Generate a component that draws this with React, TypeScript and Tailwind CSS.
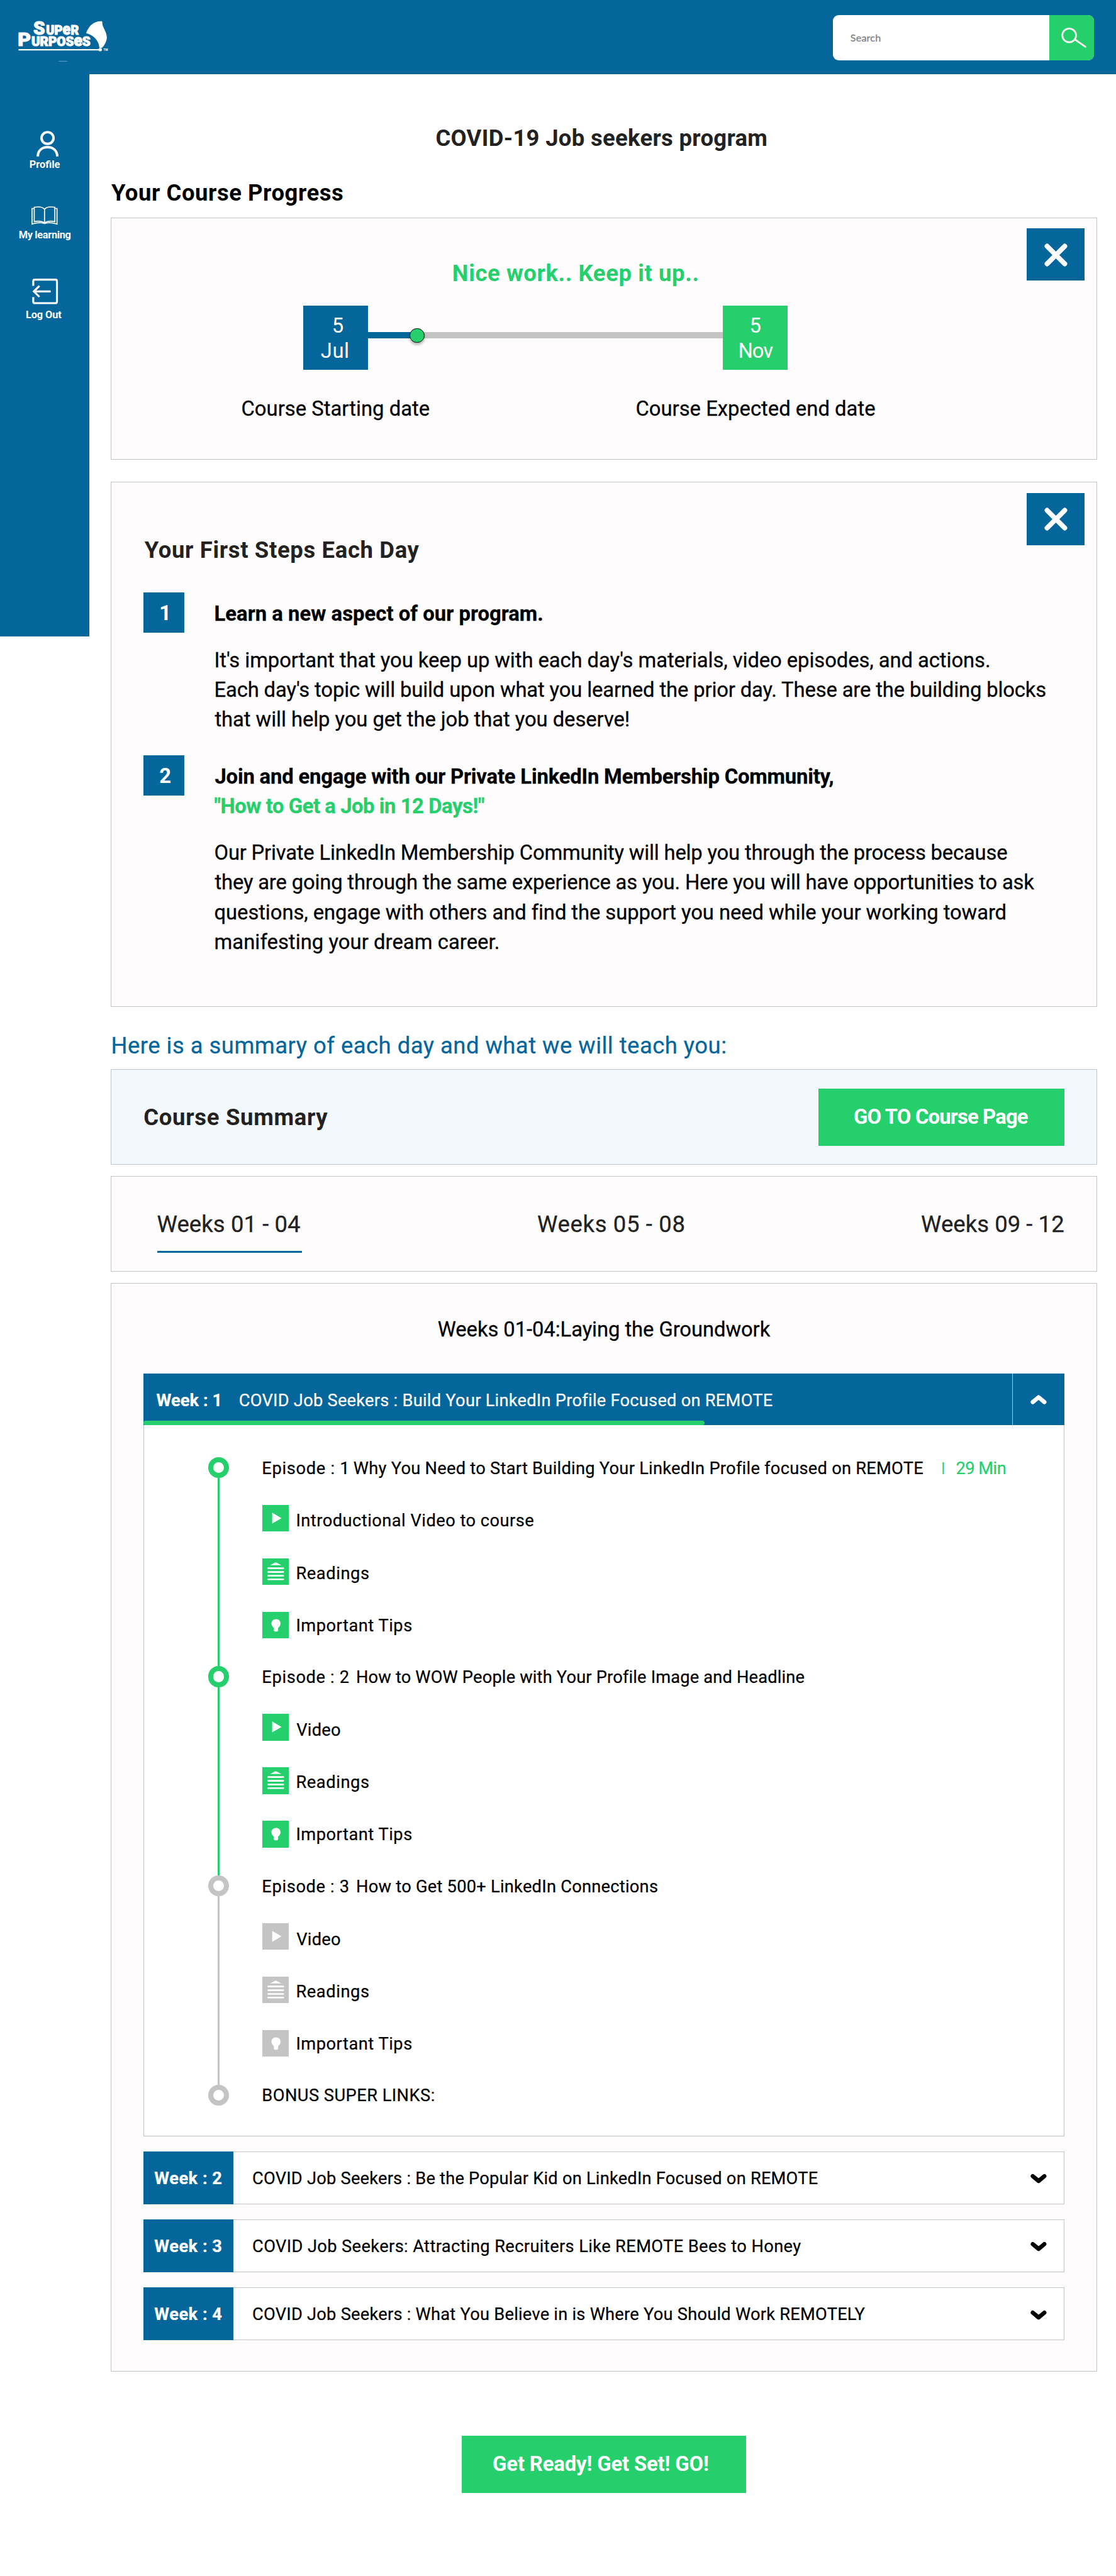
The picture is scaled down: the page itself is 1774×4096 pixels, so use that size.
import React from "react";

/* ---------- icons ---------- */

function Logo() {
  return (
    <svg width="170" height="84" viewBox="24 28 170 84" fill="#fff" stroke="#fff" strokeLinejoin="round" fontFamily="Roboto, sans-serif" fontWeight="900">
      <g strokeWidth="1.2">
        <text x="57.6" y="59.5" fontSize="32" textLength="20" lengthAdjust="spacingAndGlyphs">S</text>
        <text x="79.6" y="59.5" fontSize="21" textLength="28.4" lengthAdjust="spacingAndGlyphs">UP</text>
        <text x="108" y="59.5" fontSize="27" textLength="13.4" lengthAdjust="spacingAndGlyphs">e</text>
        <text x="121.6" y="59.5" fontSize="21" textLength="14.2" lengthAdjust="spacingAndGlyphs">R</text>
        <text x="30.8" y="79.4" fontSize="32" textLength="22.5" lengthAdjust="spacingAndGlyphs">P</text>
        <text x="54.2" y="79.4" fontSize="21" textLength="73" lengthAdjust="spacingAndGlyphs">URPOS</text>
        <text x="127.4" y="79.4" fontSize="27" textLength="14.4" lengthAdjust="spacingAndGlyphs">e</text>
        <text x="141.8" y="79.4" fontSize="21" textLength="14" lengthAdjust="spacingAndGlyphs">S</text>
      </g>
      <path d="M175.6 36.4 C163 35.2 152.5 44 148.4 57 C160 60 170.5 69 171 81.6 C173 83 175.5 82.6 176.3 81.6 C181 76.5 184 70 184 64 C184 54 175.5 46.5 176.2 38 Z" stroke="none" />
      <path d="M32 85.5 H172" strokeWidth="2.6" />
      <circle cx="172.6" cy="85.3" r="2.9" stroke="none" />
      <text x="178.2" y="88" fontSize="5.2" stroke="none" fontFamily="Liberation Sans, sans-serif" fontWeight="700">TM</text>
      <path d="M101 105.3 H116" strokeWidth="1" opacity=".4" />
    </svg>
  );
}

function SearchIcon() {
  return (
    <svg width="46" height="38" viewBox="1824 47 46 38" fill="none" stroke="#fdf4f2" strokeWidth="3" strokeLinecap="round">
      <circle cx="1838.7" cy="62.4" r="11.8" />
      <path d="M1849.3 70 L1866.6 82" />
    </svg>
  );
}

function ProfileIcon() {
  return (
    <svg width="38" height="44" viewBox="0 0 38 44" fill="none" stroke="#fff" strokeWidth="4.3">
      <ellipse cx="19" cy="12.4" rx="10.3" ry="10.1" />
      <path d="M2.3 44 C2.3 34 9.5 28.2 19 28.2 C28.5 28.2 35.7 34 35.7 44" />
    </svg>
  );
}

function BookIcon() {
  return (
    <svg width="45" height="32" viewBox="0 0 45 32" fill="none" stroke="#fff" strokeWidth="1.8" strokeLinejoin="miter">
      <path d="M22.5 5 C19 1 13 .2 4.8 1.8 V26.4 C12 25 18 25.4 22.5 28.4 C27 25.4 33 25 40.2 26.4 V1.8 C32 .2 26 1 22.5 5 Z" />
      <path d="M22.5 5 V28.4" />
      <path d="M4.8 3.8 H1 V30.6 C9 28 17 27.6 22.5 29.6 C28 27.6 36 28 44 30.6 V3.8 H40.2" />
    </svg>
  );
}

function LogOutIcon() {
  return (
    <svg width="45" height="44" viewBox="0 0 45 44" fill="none" stroke="#fff" strokeWidth="3.4">
      <path d="M2 12.5 V4.6 Q2 1.8 4.8 1.8 H40 Q42.8 1.8 42.8 4.6 V39.4 Q42.8 42.2 40 42.2 H4.8 Q2 42.2 2 39.4 V32" />
      <path d="M32 22 H3.2 M12.6 12.6 L3 22 L12.6 31.4" />
    </svg>
  );
}

function CloseIcon() {
  return (
    <svg width="40" height="40" viewBox="0 0 40 40" fill="none" stroke="#fff" strokeWidth="8.4" strokeLinecap="round">
      <path d="M4.8 4.8 L35.2 35.2 M35.2 4.8 L4.8 35.2" />
    </svg>
  );
}

function Chevron({ up = false }: { up?: boolean }) {
  return (
    <svg width="28" height="18" viewBox="0 0 28 18" fill="none" stroke={up ? "#fff" : "#000"} strokeWidth="7.2" strokeLinecap="round" strokeLinejoin="round" className={up ? "" : "rotate-180"}>
      <path d="M4 13.4 L14 5.2 L24 13.4" />
    </svg>
  );
}

type Kind = "video" | "reading" | "tips";

function ItemIcon({ kind, done }: { kind: Kind; done: boolean }) {
  return (
    <svg width="46" height="46" viewBox="0 0 46 46" fill="#fff" className={done ? "shrink-0 bg-[#25cf6c]" : "shrink-0 bg-[#c4c4c4]"}>
      {kind === "video" && <path d="M17 13.2 L33 22.6 L17 32 Z" />}
      {kind === "reading" && (
        <>
          <path d="M13.6 11.6 L20 8 Q23 6.2 26 8 L33 11.6 Z" />
          <path d="M10.2 17 H36 M10.2 23.4 H36 M10.2 29.8 H36 M10.2 36 H36" stroke="#fff" strokeWidth="2.9" strokeLinecap="round" />
        </>
      )}
      {kind === "tips" && <path d="M23.5 12.4 C28.4 12.4 31.3 15.8 31.3 20 C31.3 24 28.6 26 27.2 27.6 V31 Q27.2 33.8 23.5 33.8 Q19.8 33.8 19.8 31 V27.6 C18.4 26 15.7 24 15.7 20 C15.7 15.8 18.6 12.4 23.5 12.4 Z" />}
    </svg>
  );
}

/* ---------- shared pieces ---------- */

function CloseButton() {
  return (
    <button className="absolute top-[18px] right-[20px] flex h-[90px] w-[100px] items-center justify-center bg-[#05669c] pt-[1px] pl-[2px]">
      <CloseIcon />
    </button>
  );
}

function Step({ n, children }: { n: number; children: React.ReactNode }) {
  return (
    <div className="flex gap-[51.5px]">
      <div className="h-[70px] w-[70px] shrink-0 bg-[#05669c] pt-[11.5px] pl-[27px] text-[35.5px] leading-[51px] font-bold text-white">{n}</div>
      <div className="pt-[12.5px] text-[35.5px] leading-[51px] whitespace-nowrap [-webkit-text-stroke:0.3px]">{children}</div>
    </div>
  );
}

interface Item {
  kind: Kind;
  label: string;
  text: string;
}

const readings: Item = { kind: "reading", label: "Readings", text: "pt-[7px] tracking-[0.64px]" };
const tips: Item = { kind: "tips", label: "Important Tips", text: "pt-[3px] tracking-[0.55px]" };
const video: Item = { kind: "video", label: "Video", text: "pt-[11px] pl-[1px] tracking-[0.24px]" };
const intro: Item = { kind: "video", label: "Introductional Video to course", text: "pt-[11px] tracking-[0.52px]" };

interface EpisodeData {
  name: string;
  nameClass: string;
  title: string;
  titleClass: string;
  done: boolean;
  time?: string;
  items: Item[];
}

const episodes: EpisodeData[] = [
  {
    name: "Episode : 1",
    nameClass: "w-[157.5px] tracking-[0.74px]",
    title: "Why You Need to Start Building Your LinkedIn Profile focused on REMOTE",
    titleClass: "w-[979.5px] tracking-[0.28px]",
    done: true,
    time: "29 Min",
    items: [intro, readings, tips],
  },
  {
    name: "Episode : 2",
    nameClass: "w-[162px] tracking-[0.7px]",
    title: "How to WOW People with Your Profile Image and Headline",
    titleClass: "tracking-[0.18px]",
    done: true,
    items: [video, readings, tips],
  },
  {
    name: "Episode : 3",
    nameClass: "w-[162px] tracking-[0.7px]",
    title: "How to Get 500+ LinkedIn Connections",
    titleClass: "tracking-[0.27px]",
    done: false,
    items: [video, readings, tips],
  },
];

function Ring({ done }: { done: boolean }) {
  return <div className={done ? "h-[36px] w-[36px] shrink-0 rounded-full border-[9px] border-[#25cf6c] bg-white" : "h-[36px] w-[36px] shrink-0 rounded-full border-[9px] border-[#c4c4c4] bg-white"} />;
}

function Episode({ e }: { e: EpisodeData }) {
  return (
    <div className="flex h-[360px] gap-[56.5px]">
      <div className="flex w-[36px] flex-col items-center">
        <Ring done={e.done} />
        <div className={e.done ? "w-[4px] flex-1 bg-[#25cf6c]" : "w-[4px] flex-1 bg-[#c4c4c4]"} />
      </div>
      <div className="pt-[2px]">
        <div className="flex h-[36px] leading-[36px]">
          <span className={e.nameClass}>{e.name}</span>
          <span className={e.titleClass}>{e.title}</span>
          {e.time && (
            <span className="flex text-[#25cf6c]">
              <span className="w-[57px] pl-[32px] text-[24px] leading-[32px] font-bold">|</span>
              <span className="tracking-[-0.58px]">{e.time}</span>
            </span>
          )}
        </div>
        <div className="mt-[44px] flex flex-col gap-[46px] pl-[0.5px]">
          {e.items.map((it) => (
            <div key={it.label} className="flex h-[46px] items-center gap-[12px]">
              <ItemIcon kind={it.kind} done={e.done} />
              <span className={it.text}>{it.label}</span>
            </div>
          ))}
        </div>
      </div>
    </div>
  );
}

const weeks = [
  { n: "Week : 2", title: "COVID Job Seekers : Be the Popular Kid on LinkedIn Focused on REMOTE", cls: "tracking-[0.24px]" },
  { n: "Week : 3", title: "COVID Job Seekers: Attracting Recruiters Like REMOTE Bees to Honey", cls: "tracking-[0.41px]" },
  { n: "Week : 4", title: "COVID Job Seekers : What You Believe in is Where You Should Work REMOTELY", cls: "tracking-[0.26px]" },
];

/* ---------- page ---------- */

export default function App() {
  return (
    <div className="h-[4096px] w-[1774px] overflow-hidden bg-white">
      <div className="w-[1920px] font-['Roboto',sans-serif] text-black [zoom:0.92396]">
        <header className="flex h-[128px] items-start justify-between bg-[#05669c] pr-[38px] pl-[24px]">
          <div className="pt-[28px]">
            <Logo />
          </div>
          <div className="mt-[26px] flex h-[78px] w-[449px] overflow-hidden rounded-[10px] bg-white">
            <div className="flex flex-1 items-center pl-[30px] font-['Lato',sans-serif] text-[17.5px] tracking-[0.2px] text-[#7b7e86] [-webkit-text-stroke:0.3px]">Search</div>
            <div className="flex w-[77px] items-center justify-center bg-[#25cf6c] pl-[8px]">
              <SearchIcon />
            </div>
          </div>
        </header>

        <div className="flex items-start">
          <aside className="flex h-[967px] w-[154px] shrink-0 flex-col items-center bg-[#05669c] pt-[97px] text-[17.7px] leading-[22px] font-bold whitespace-nowrap text-white">
            <div className="pl-[10px]">
              <ProfileIcon />
            </div>
            <span className="mt-[3.5px]">Profile</span>
            <div className="mt-[60.5px]">
              <BookIcon />
            </div>
            <span className="mt-[7.5px] tracking-[-0.35px]">My learning</span>
            <div className="mt-[63.5px] pl-[2px]">
              <LogOutIcon />
            </div>
            <span className="mt-[8px] mr-[4px] tracking-[-0.11px]">Log Out</span>
          </aside>

          <main className="flex flex-1 flex-col pr-[33px] pl-[37px] whitespace-nowrap">
            <h1 className="mt-[86px] pr-[8px] text-center text-[39.5px] leading-[48px] font-bold tracking-[0.32px] text-[#222]">COVID-19 Job seekers program</h1>
            <h2 className="mt-[47px] pl-[0.5px] text-[39.5px] leading-[48px] font-bold tracking-[0.58px]">Your Course Progress</h2>

            <section className="relative mt-[17px] h-[417px] border border-[#c4c4c4] bg-[#fefcfd] pt-[71.5px]">
              <CloseButton />
              <p className="pr-[97px] text-center text-[39.5px] leading-[48px] font-bold tracking-[0.64px] text-[#25cf6c]">Nice work.. Keep it up..</p>
              <div className="mt-[31px] ml-[330px] flex items-start text-center text-[35.5px] leading-[43px] text-white">
                <div className="h-[111px] w-[111px] bg-[#05669c] pt-[15px]">
                  <div className="pl-[7px]">5</div>
                  <div className="pr-[2px] tracking-[0.67px]">Jul</div>
                </div>
                <div className="relative mt-[46px] h-[11px] w-[611px] bg-[#c4c4c4]">
                  <div className="h-full w-[85px] bg-[#05669c]" />
                  <div className="absolute top-[-7px] left-[72px] h-[25px] w-[25px] rounded-full border-2 border-black bg-[#25cf6c] shadow-[0_4px_4px_rgba(0,0,0,0.25)]" />
                </div>
                <div className="h-[111px] w-[111px] bg-[#25cf6c] pt-[15px]">
                  <div>5</div>
                  <div className="tracking-[-1.16px]">Nov</div>
                </div>
              </div>
              <div className="mt-[45.5px] ml-[223px] flex text-[35.5px] leading-[44px] [-webkit-text-stroke:0.3px]">
                <span className="w-[678.5px] tracking-[0.01px]">Course Starting date</span>
                <span className="tracking-[0.01px]">Course Expected end date</span>
              </div>
            </section>

            <section className="relative mt-[38px] h-[904px] border border-[#c4c4c4] bg-[#fefcfd] pt-[93.5px] pl-[55px]">
              <CloseButton />
              <h3 className="pl-[1.5px] text-[39.5px] leading-[48px] font-bold tracking-[0.7px] text-[#222]">Your First Steps Each Day</h3>
              <div className="mt-[47.5px] flex flex-col gap-[35px]">
                <Step n={1}>
                  <div className="font-bold tracking-[0.04px]">Learn a new aspect of our program.</div>
                  <div className="mt-[29px]">
                    <div className="tracking-[-0.09px]">It's important that you keep up with each day's materials, video episodes, and actions.</div>
                    <div className="tracking-[-0.16px]">Each day's topic will build upon what you learned the prior day. These are the building blocks</div>
                    <div className="pl-[1px] tracking-[-0.08px]">that will help you get the job that you deserve!</div>
                  </div>
                </Step>
                <Step n={2}>
                  <div className="pl-[1px] font-bold tracking-[-0.19px]">Join and engage with our Private LinkedIn Membership Community,</div>
                  <div className="font-bold tracking-[-0.47px] text-[#25cf6c]">"How to Get a Job in 12 Days!"</div>
                  <div className="mt-[29px]">
                    <div className="tracking-[-0.22px]">Our Private LinkedIn Membership Community will help you through the process because</div>
                    <div className="pl-[1px] tracking-[-0.19px]">they are going through the same experience as you. Here you will have opportunities to ask</div>
                    <div className="tracking-[-0.09px]">questions, engage with others and find the support you need while your working toward</div>
                    <div className="tracking-[0.05px]">manifesting your dream career.</div>
                  </div>
                </Step>
              </div>
            </section>

            <p className="mt-[43.5px] text-[39.5px] leading-[48px] tracking-[0.5px] text-[#05669c] [-webkit-text-stroke:0.3px]">Here is a summary of each day and what we will teach you:</p>

            <section className="mt-[16px] flex h-[164px] items-center justify-between border border-[#c4c4c4] bg-[#f3f8fc] px-[55px]">
              <h3 className="pt-[3px] text-[39.5px] leading-[48px] font-bold tracking-[0.75px] text-[#222]">Course Summary</h3>
              <button className="h-[99px] w-[423px] bg-[#25cf6c] pt-[1px] pr-[2px] text-[35.5px] font-bold tracking-[-0.9px] text-white">GO TO Course Page</button>
            </section>

            <nav className="mt-[20px] flex h-[164px] items-center justify-between border border-[#c4c4c4] bg-[#fefcfd] pr-[55px] pl-[78px] text-[39.5px] text-[#222] [-webkit-text-stroke:0.3px]">
              <span className="flex h-[98px] w-[249px] items-center border-y-4 border-t-transparent border-b-[#05669c] pt-[2px] tracking-[0.09px]">Weeks 01 - 04</span>
              <span className="pt-[2px] tracking-[0.7px]">Weeks 05 - 08</span>
              <span className="pt-[2px] tracking-[0.05px]">Weeks 09 - 12</span>
            </nav>

            <section className="mt-[20px] h-[1873px] border border-[#c4c4c4] bg-[#fefcfd] px-[55px] pt-[57px]">
              <h4 className="text-center text-[35.5px] leading-[44px] font-normal tracking-[-0.09px] [-webkit-text-stroke:0.3px]">Weeks 01-04:Laying the Groundwork</h4>

              <div className="mt-[53px] text-[29.5px] [-webkit-text-stroke:0.25px]">
                <div className="relative flex h-[89.5px] bg-[#05669c] text-white">
                  <div className="flex flex-1 items-center pt-[5.5px] pl-[22px]">
                    <span className="w-[142px] font-bold tracking-[0.06px]">Week : 1</span>
                    <span className="tracking-[0.27px]">COVID Job Seekers : Build Your LinkedIn Profile Focused on REMOTE</span>
                  </div>
                  <div className="flex w-[90px] items-center justify-center border-l border-[#c4c4c4]">
                    <Chevron up />
                  </div>
                  <div className="absolute bottom-[0.5px] left-0 h-[8px] w-[965px] rounded-[4px] bg-[#25cf6c]" />
                </div>

                <div className="h-[1223.5px] border border-t-0 border-[#c4c4c4] bg-white pt-[54.5px] pl-[110px]">
                  {episodes.map((e) => (
                    <Episode key={e.name} e={e} />
                  ))}
                  <div className="flex gap-[56.5px]">
                    <Ring done={false} />
                    <span className="pt-[2px] leading-[36px] tracking-[0.49px]">BONUS SUPER LINKS:</span>
                  </div>
                </div>

                <div className="mt-[26px] flex flex-col gap-[26.6px]">
                  {weeks.map((w) => (
                    <div key={w.n} className="flex h-[90.5px] bg-white">
                      <div className="flex w-[154px] items-center bg-[#05669c] pt-[4px] pl-[18.5px] font-bold tracking-[0.51px] text-white">{w.n}</div>
                      <div className="flex flex-1 items-center justify-between border border-l-0 border-[#c4c4c4] pt-[4px] pr-[29px] pl-[33px]">
                        <span className={w.cls}>{w.title}</span>
                        <Chevron />
                      </div>
                    </div>
                  ))}
                </div>
              </div>
            </section>

            <button className="mt-[110px] h-[99px] w-[489px] self-center bg-[#25cf6c] pt-[1px] pr-[11px] text-[35.5px] font-bold tracking-[-0.15px] text-white">Get Ready! Get Set! GO!</button>
          </main>
        </div>
      </div>
    </div>
  );
}
